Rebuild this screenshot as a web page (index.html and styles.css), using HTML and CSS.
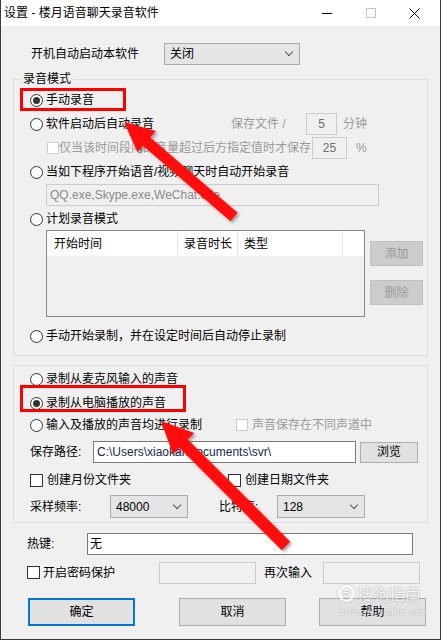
FILE: index.html
```html
<!DOCTYPE html>
<html lang="zh">
<head>
<meta charset="utf-8">
<title>设置</title>
<link rel="stylesheet" href="styles.css">
</head>
<body>
<div class="win">
  <div class="titlebar">
    <span class="title">设置 - 楼月语音聊天录音软件</span>
    <span class="ctl ctl-min"></span>
    <span class="ctl ctl-max"></span>
    <span class="ctl ctl-close">
      <svg width="11" height="11" viewBox="0 0 11 11"><path d="M0.5 0.5 L10.5 10.5 M10.5 0.5 L0.5 10.5" stroke="#000" stroke-width="1" fill="none"/></svg>
    </span>
  </div>

  <div class="row-top">
    <span class="lbl-start">开机自动启动本软件</span>
    <div class="combo w136"><span>关闭</span><i class="chev"></i></div>
  </div>

  <fieldset class="group g1">
    <legend>录音模式</legend>
    <div class="row first"><span class="radio on"></span><span>手动录音</span></div>
    <div class="row">
      <span class="radio"></span><span class="w185">软件启动后自动录音</span>
      <span class="muted w75">保存文件 /</span>
      <span class="field dis w31">5</span>
      <span class="muted ml6">分钟</span>
    </div>
    <div class="row ind34">
      <span class="chk dis"></span><span class="muted w253">仅当该时间段内的音量超过后方指定值时才保存</span>
      <span class="field dis w35 h21">25</span>
      <span class="muted ml9">%</span>
    </div>
    <div class="row"><span class="radio"></span><span>当如下程序开始语音/视频聊天时自动开始录音</span></div>
    <div class="qq">QQ.exe,Skype.exe,WeChat.exe</div>
    <div class="row r22"><span class="radio"></span><span>计划录音模式</span></div>
    <div class="listblock">
      <div class="list">
        <div class="lhead">
          <span class="c1">开始时间</span><span class="c2">录音时长</span><span class="c3">类型</span><span class="c4"></span>
        </div>
      </div>
      <div class="sidebtns">
        <span class="btn dis b1">添加</span>
        <span class="btn dis b2">删除</span>
      </div>
    </div>
    <div class="row mt7"><span class="radio"></span><span>手动开始录制，并在设定时间后自动停止录制</span></div>
  </fieldset>

  <fieldset class="group g2">
    <div class="row"><span class="radio"></span><span>录制从麦克风输入的声音</span></div>
    <div class="row"><span class="radio on"></span><span>录制从电脑播放的声音</span></div>
    <div class="row h20">
      <span class="radio"></span><span class="w190">输入及播放的声音均进行录制</span>
      <span class="chk dis"></span><span class="muted ml4">声音保存在不同声道中</span>
    </div>
    <div class="row mt5">
      <span class="w63">保存路径:</span>
      <span class="field w263 path">C:\Users\xiaokai\Documents\svr\</span>
      <span class="btn w58 h21 ml4">浏览</span>
    </div>
    <div class="row mt4">
      <span class="w198 flexc"><span class="chk"></span><span class="ml4">创建月份文件夹</span></span>
      <span class="chk"></span><span class="ml4">创建日期文件夹</span>
    </div>
    <div class="row h23 mt3">
      <span class="w80">采样频率:</span>
      <div class="combo w78 h23"><span class="num">48000</span><i class="chev"></i></div>
      <span class="w58 ml31">比特率:</span>
      <div class="combo w88 h23"><span class="num">128</span><i class="chev"></i></div>
    </div>
  </fieldset>

  <div class="row-hot">
    <span class="w60">热键:</span>
    <span class="field w326 h23 white">无</span>
  </div>
  <div class="row-pw">
    <span class="chk"></span><span class="w116 ml3">开启密码保护</span>
    <span class="field dis w97 h23"></span>
    <span class="w59 ml8">再次输入</span>
    <span class="field dis w97 h23"></span>
  </div>
  <div class="row-btns">
    <span class="btn big focus">确定</span>
    <span class="btn big ml44">取消</span>
    <span class="btn big ml33">帮助</span>
  </div>

  <div class="mark mark1"></div>
  <div class="mark mark2"></div>

  <div class="watermark">
    <div class="wm-top"><span class="wm-logo">S</span><span class="wm-cn">搜狗指南</span></div>
    <div class="wm-url">zhinan.sogou.com</div>
  </div>

  <svg class="arrows" width="441" height="640" viewBox="0 0 441 640">
    <defs>
      <filter id="sh" x="-20%" y="-20%" width="140%" height="140%">
        <feDropShadow dx="2" dy="2" stdDeviation="1.5" flood-color="#000" flood-opacity="0.35"/>
      </filter>
    </defs>
    <polygon filter="url(#sh)" fill="#ff1010" points="124,122 155.9,131 150.3,137.4 237.6,212.8 230.4,221.2 143.1,145.8 137.5,152.2"/>
    <polygon filter="url(#sh)" fill="#ff1010" points="161,421 194.2,433 187.8,439.4 290.2,541.8 281.8,550.2 179.4,447.8 173,454.2"/>
  </svg>
</div>
</body>
</html>
```
FILE: styles.css
```css
* { box-sizing: border-box; }
html, body { margin: 0; padding: 0; }
body {
  width: 441px;
  height: 640px;
  overflow: hidden;
  font-family: "Liberation Sans", "Noto Sans CJK SC", sans-serif;
  font-size: 12px;
  line-height: 14px;
  color: #000;
  background: #2b2b2b;
}
.win {
  position: relative;
  width: 441px;
  height: 640px;
  background: #f0f0f0;
  border-left: 1px solid #3a3a3a;
  border-right: 1px solid #3a3a3a;
  border-bottom: 1px solid #3a3a3a;
  overflow: hidden;
}
.titlebar {
  height: 26px;
  background: #fff;
  display: flex;
  align-items: center;
}
.title { margin-left: 3px; flex: 1; }
.ctl { display: block; }
.ctl-min { width: 10px; height: 1px; background: #000; margin-right: 34px; }
.ctl-max { width: 10px; height: 10px; border: 1px solid #c4c4c4; margin-right: 33px; }
.ctl-close { width: 11px; height: 11px; margin-right: 20px; }
.ctl-close svg { display: block; }

.row-top {
  display: flex;
  align-items: center;
  margin-top: 17px;
  height: 22px;
  padding-left: 30px;
}
.lbl-start { width: 133px; }

.combo {
  display: flex;
  align-items: center;
  height: 22px;
  background: #e5e5e5;
  border: 1px solid #adadad;
  padding-left: 5px;
  position: relative;
}
.combo span { flex: 1; }
.combo .num { padding-top: 1px; }
.chev {
  width: 6px;
  height: 6px;
  border-right: 1px solid #555;
  border-bottom: 1px solid #555;
  transform: rotate(45deg);
  margin-right: 7px;
  margin-top: -4px;
}

.group {
  margin: 0 12px 0 12px;
  padding: 0;
  border: 1px solid #dcdcdc;
  min-width: 0;
}
.g1 { margin-top: 7px; padding-bottom: 7px; }
.g1 legend { margin-left: 7px; padding: 0 2px; line-height: 14px; }
.g2 { margin-top: 9px; padding-top: 1px; padding-bottom: 4px; }

.row {
  display: flex;
  align-items: center;
  height: 24px;
  padding-left: 16px;
  white-space: nowrap;
}
.row.first { margin-top: 2px; }
.row.r22 { height: 22px; margin-top: 2px; }
.row.h23 { height: 23px; }
.row.h20 { height: 20px; }
.ind34 { padding-left: 33px; }
.mt3 { margin-top: 3px; }
.mt4 { margin-top: 4px; }
.mt5 { margin-top: 5px; }
.mt7 { margin-top: 7px; }
.ml3 { margin-left: 3px; }
.ml4 { margin-left: 4px; }
.ml6 { margin-left: 6px; }
.ml8 { margin-left: 8px; }
.ml9 { margin-left: 9px; }
.ml31 { margin-left: 31px; }
.ml33 { margin-left: 33px; }
.ml44 { margin-left: 44px; }
.flexc { display: flex; align-items: center; }

.w31 { width: 31px; }
.w35 { width: 35px; }
.w58 { width: 58px; }
.w59 { width: 59px; }
.w60 { width: 60px; }
.w63 { width: 63px; }
.w75 { width: 75px; }
.w78 { width: 78px; }
.w80 { width: 80px; }
.w88 { width: 88px; }
.w97 { width: 97px; }
.w116 { width: 116px; }
.w136 { width: 136px; }
.w185 { width: 185px; }
.w190 { width: 190px; }
.w198 { width: 198px; }
.w253 { width: 253px; }
.w263 { width: 263px; }
.w326 { width: 326px; }
.h21 { height: 21px; }
.h23 { height: 23px; }

.muted { color: #9a9a9a; }

.radio {
  width: 13px;
  height: 13px;
  border: 1px solid #333;
  border-radius: 50%;
  background: #fff;
  margin-right: 3px;
  flex: none;
  display: flex;
  align-items: center;
  justify-content: center;
}
.radio.on::after {
  content: "";
  width: 7px;
  height: 7px;
  border-radius: 50%;
  background: #333;
}
.chk {
  width: 13px;
  height: 13px;
  border: 1px solid #333;
  background: #fff;
  flex: none;
}
.chk.dis { border-color: #cccccc; width: 12px; height: 12px; }

.field {
  display: flex;
  align-items: center;
  height: 22px;
  border: 1px solid #7a7a7a;
  background: #fff;
  padding-left: 4px;
  flex: none;
}
.field.dis {
  border-color: #cccccc;
  background: #f0f0f0;
  color: #6d6d6d;
  justify-content: center;
  padding-left: 0;
}
.field.white { padding-left: 2px; }
.path { color: #13294b; padding-left: 3px; }

.qq {
  margin-left: 32px;
  width: 333px;
  height: 22px;
  border: 1px solid #cccccc;
  color: #8a8a8a;
  padding-left: 3px;
  display: flex;
  align-items: center;
}

.listblock {
  display: flex;
  margin-left: 32px;
  height: 87px;
}
.list {
  width: 319px;
  height: 87px;
  border: 1px solid #828790;
  background: #f0f0f0;
}
.lhead {
  display: flex;
  height: 25px;
  background: #fff;
}
.lhead span {
  display: flex;
  align-items: center;
  border-right: 1px solid #e5e5e5;
  height: 25px;
}
.lhead .c1 { width: 131px; padding-left: 7px; }
.lhead .c2 { width: 60px; padding-left: 6px; }
.lhead .c3 { width: 105px; padding-left: 6px; }
.lhead .c4 { width: 21px; border-right: none; }

.sidebtns {
  margin-left: 5px;
  display: flex;
  flex-direction: column;
}
.btn {
  display: flex;
  align-items: center;
  justify-content: center;
  height: 21px;
  background: #e1e1e1;
  border: 1px solid #adadad;
  flex: none;
}
.btn.dis {
  width: 53px;
  height: 25px;
  background: #cccccc;
  border-color: #bfbfbf;
  color: #9a9a9a;
}
.b1 { margin-top: 11px; }
.b2 { margin-top: 14px; }

.row-hot {
  display: flex;
  align-items: center;
  margin-top: 9px;
  height: 23px;
  padding-left: 26px;
}
.row-pw {
  display: flex;
  align-items: center;
  margin-top: 6px;
  height: 23px;
  padding-left: 26px;
}
.row-btns {
  display: flex;
  margin-top: 14px;
  padding-left: 27px;
}
.btn.big { width: 107px; height: 28px; }
.btn.focus { border: 2px solid #0078d7; }

.mark {
  position: absolute;
  border: 3px solid #ff0000;
}
.mark1 { left: 19px; top: 88px; width: 106px; height: 23px; }
.mark2 { left: 19px; top: 385px; width: 166px; height: 27px; }

.arrows {
  position: absolute;
  left: -1px;
  top: 0;
  pointer-events: none;
}

.watermark {
  position: absolute;
  left: 337px;
  top: 584px;
  color: rgba(255,255,255,0.85);
  text-shadow: 0 0 2px rgba(0,0,0,0.35);
}
.wm-top { display: flex; align-items: center; }
.wm-logo {
  width: 17px;
  height: 17px;
  border-radius: 50%;
  border: 2px solid rgba(255,255,255,0.85);
  font-family: "DejaVu Sans", sans-serif;
  font-weight: bold;
  font-size: 11px;
  line-height: 13px;
  text-align: center;
  box-shadow: 0 0 2px rgba(0,0,0,0.3);
}
.wm-cn { font-size: 16px; line-height: 18px; margin-left: 2px; font-family: "Noto Sans CJK SC", sans-serif; }
.wm-url { font-family: "DejaVu Sans Mono", monospace; font-size: 8px; line-height: 10px; margin-top: 6px; letter-spacing: 0.6px; padding-left: 2px; }
```
